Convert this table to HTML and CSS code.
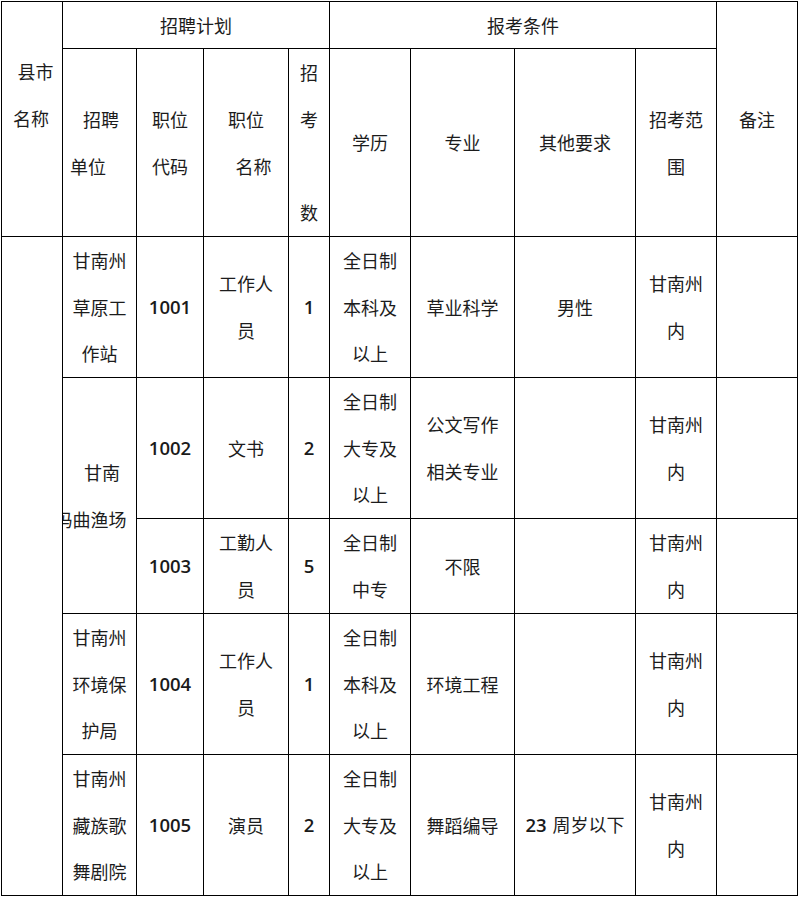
FILE: index.html
```html
<!DOCTYPE html>
<html lang="zh-CN">
<head>
<meta charset="utf-8">
<title>招聘计划</title>
<link rel="stylesheet" href="styles.css">
</head>
<body>
<div class="sheet">
  <div class="cell head-county"><span class="ln sh-r7">县市</span><span class="ln sh-l2">名称</span></div>
  <div class="cell span-c4">招聘计划</div>
  <div class="cell span-c4">报考条件</div>
  <div class="cell span-r2">备注</div>

  <div class="cell"><span class="ln sh-r3">招聘</span><span class="ln sh-l23">单位</span></div>
  <div class="cell"><span class="ln">职位</span><span class="ln">代码</span></div>
  <div class="cell"><span class="ln">职位</span><span class="ln sh-r15">名称</span></div>
  <div class="cell"><span class="ln">招</span><span class="ln">考</span><span class="ln">&nbsp;</span><span class="ln">数</span></div>
  <div class="cell">学历</div>
  <div class="cell">专业</div>
  <div class="cell">其他要求</div>
  <div class="cell"><span class="ln">招考范</span><span class="ln">围</span></div>

  <div class="cell span-r5"></div>

  <div class="cell"><span class="ln">甘南州</span><span class="ln">草原工</span><span class="ln">作站</span></div>
  <div class="cell num">1001</div>
  <div class="cell"><span class="ln">工作人</span><span class="ln">员</span></div>
  <div class="cell num">1</div>
  <div class="cell"><span class="ln">全日制</span><span class="ln">本科及</span><span class="ln">以上</span></div>
  <div class="cell">草业科学</div>
  <div class="cell">男性</div>
  <div class="cell"><span class="ln">甘南州</span><span class="ln">内</span></div>
  <div class="cell"></div>

  <div class="cell span-r2 clip"><span class="ln sh-r5">甘南</span><span class="ln pull-l18">玛曲渔场</span></div>
  <div class="cell num">1002</div>
  <div class="cell">文书</div>
  <div class="cell num">2</div>
  <div class="cell"><span class="ln">全日制</span><span class="ln">大专及</span><span class="ln">以上</span></div>
  <div class="cell"><span class="ln">公文写作</span><span class="ln">相关专业</span></div>
  <div class="cell"></div>
  <div class="cell"><span class="ln">甘南州</span><span class="ln">内</span></div>
  <div class="cell"></div>

  <div class="cell num">1003</div>
  <div class="cell"><span class="ln">工勤人</span><span class="ln">员</span></div>
  <div class="cell num">5</div>
  <div class="cell"><span class="ln">全日制</span><span class="ln">中专</span></div>
  <div class="cell">不限</div>
  <div class="cell"></div>
  <div class="cell"><span class="ln">甘南州</span><span class="ln">内</span></div>
  <div class="cell"></div>

  <div class="cell"><span class="ln">甘南州</span><span class="ln">环境保</span><span class="ln">护局</span></div>
  <div class="cell num">1004</div>
  <div class="cell"><span class="ln">工作人</span><span class="ln">员</span></div>
  <div class="cell num">1</div>
  <div class="cell"><span class="ln">全日制</span><span class="ln">本科及</span><span class="ln">以上</span></div>
  <div class="cell">环境工程</div>
  <div class="cell"></div>
  <div class="cell"><span class="ln">甘南州</span><span class="ln">内</span></div>
  <div class="cell"></div>

  <div class="cell"><span class="ln">甘南州</span><span class="ln">藏族歌</span><span class="ln">舞剧院</span></div>
  <div class="cell num">1005</div>
  <div class="cell">演员</div>
  <div class="cell num">2</div>
  <div class="cell"><span class="ln">全日制</span><span class="ln">大专及</span><span class="ln">以上</span></div>
  <div class="cell">舞蹈编导</div>
  <div class="cell"><span class="ln"><span class="digits">23</span><span class="gap"> </span>周岁以下</span></div>
  <div class="cell"><span class="ln">甘南州</span><span class="ln">内</span></div>
  <div class="cell"></div>
</div>
</body>
</html>
```

FILE: styles.css
```css
html, body {
  margin: 0;
  padding: 0;
  background: #ffffff;
}

body {
  font-family: "Noto Sans CJK SC", "Microsoft YaHei", sans-serif;
  font-size: 18px;
  color: #1c1c1c;
}

.sheet {
  display: grid;
  grid-template-columns: 61px 74px 67px 85px 41px 81px 104px 121px 81px 81px;
  grid-template-rows: 47px 188px 141px 141px 95px 141px 141px;
  width: 797px;
  box-sizing: border-box;
  margin: 1px 0 0 1px;
  border-left: 1px solid #000;
  border-top: 1px solid #000;
}

.cell {
  box-sizing: border-box;
  border-right: 1px solid #000;
  border-bottom: 1px solid #000;
  display: flex;
  flex-direction: column;
  justify-content: center;
  align-items: stretch;
  text-align: center;
  line-height: 46.6px;
  white-space: nowrap;
  min-width: 0;
}

.ln {
  display: block;
}

.span-c4 {
  grid-column: span 4;
}

.span-r2 {
  grid-row: span 2;
}

.span-r5 {
  grid-row: span 5;
}

.head-county {
  grid-row: span 2;
  justify-content: flex-start;
  padding-top: 46px;
}

.clip {
  overflow: hidden;
}

.sh-r3 { padding-left: 3px; }
.sh-r5 { padding-left: 5px; }
.sh-r7 { padding-left: 7px; }
.sh-r15 { padding-left: 15px; }
.sh-l2 { padding-right: 2px; }
.sh-l23 { padding-right: 23px; }
.pull-l18 { margin-left: -18px; }

.num,
.digits {
  font-family: "Open Sans", "Noto Sans", sans-serif;
  font-weight: 600;
  font-size: 18.5px;
  color: #1a1a1a;
}

.gap {
  display: inline-block;
  width: 6px;
}
```
